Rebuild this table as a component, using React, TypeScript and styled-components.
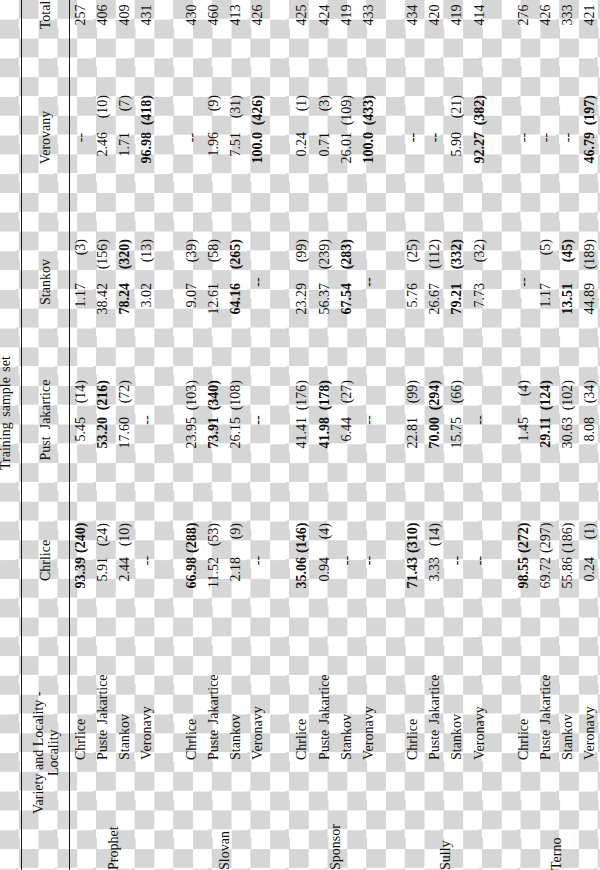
import React from 'react';
import styled, { createGlobalStyle } from 'styled-components';

const GlobalStyle = createGlobalStyle`
  html, body {
    margin: 0;
    padding: 0;
    background: #fff;
  }
`;

// the whole table is printed sideways, so it is laid out as an 870x600 sheet and turned
const COLS = '110px 162px 45px 30px 63px 47px 33px 55px 46px 40px 59px 52px 33px 65px 30px';
const ROW_H = 22.15;

const Page = styled.div`
  width: 600px;
  height: 870px;
  overflow: hidden;
  background-color: #fff;
  background-image: repeating-conic-gradient(#d6d6d6 0 25%, #ffffff 0 50%);
  background-size: 38.6px 38.6px;
  background-position: 0 0;
`;

const Sheet = styled.div`
  width: 870px;
  height: 600px;
  transform-origin: 0 0;
  transform: translateY(870px) rotate(-90deg);
  font-family: 'Liberation Serif', 'Times New Roman', serif;
  font-size: 14px;
  color: #111;
`;

const TitleRow = styled.div`
  height: 21px;
  border-bottom: 1px solid #1a1a1a;
  display: flex;
  align-items: flex-start;
`;

const Title = styled.div`
  margin-left: 400px;
  line-height: 11px;
  word-spacing: 2px;
  white-space: nowrap;
`;

const HeaderRow = styled.div`
  display: grid;
  grid-template-columns: ${COLS};
  height: 47px;
  border-bottom: 1px solid #1a1a1a;
  align-items: center;
`;

const HeaderLead = styled.div`
  grid-column: 1 / 3;
  justify-self: start;
  margin-left: 56px;
  text-align: center;
  line-height: 15px;
`;

const HeaderCell = styled.div<{ $col: number; $span: number }>`
  grid-column: ${(p) => p.$col} / span ${(p) => p.$span};
  justify-self: center;
  white-space: nowrap;
`;

const Group = styled.div`
  display: grid;
  grid-template-columns: ${COLS};
  grid-template-rows: repeat(4, ${ROW_H}px);
  align-items: center;
  margin-bottom: ${ROW_H}px;
`;

const Variety = styled.div`
  grid-column: 1;
  grid-row: 1 / 5;
  white-space: nowrap;
`;

const Locality = styled.div<{ $row: number }>`
  grid-column: 2;
  grid-row: ${(p) => p.$row};
  white-space: nowrap;
  word-spacing: 2px;
`;

const Num = styled.div<{ $col: number; $row: number; $bold?: boolean }>`
  grid-column: ${(p) => p.$col};
  grid-row: ${(p) => p.$row};
  padding-right: 4px;
  text-align: right;
  white-space: nowrap;
  font-weight: ${(p) => (p.$bold ? 700 : 400)};
`;

const Count = styled.div<{ $col: number; $row: number; $bold?: boolean }>`
  grid-column: ${(p) => p.$col};
  grid-row: ${(p) => p.$row};
  text-align: right;
  white-space: nowrap;
  font-weight: ${(p) => (p.$bold ? 700 : 400)};
`;

const Dash = styled.div<{ $col: number; $row: number; $bold?: boolean }>`
  grid-column: ${(p) => p.$col} / span 2;
  grid-row: ${(p) => p.$row};
  text-align: center;
  font-weight: ${(p) => (p.$bold ? 700 : 400)};
`;

const Total = styled.div<{ $row: number }>`
  grid-column: 15;
  grid-row: ${(p) => p.$row};
  text-align: center;
`;

type Cell = [string, string, boolean?] | null | 'b';

type Line = { place: string; cells: Cell[]; total: number };

const groups: { variety: string; lines: Line[] }[] = [
  {
    variety: 'Prophet',
    lines: [
      { place: 'Chrlice', cells: [['93.39', '(240)', true], ['5.45', '(14)'], ['1.17', '(3)'], null], total: 257 },
      { place: 'Puste Jakartice', cells: [['5.91', '(24)'], ['53.20', '(216)', true], ['38.42', '(156)'], ['2.46', '(10)']], total: 406 },
      { place: 'Stankov', cells: [['2.44', '(10)'], ['17.60', '(72)'], ['78.24', '(320)', true], ['1.71', '(7)']], total: 409 },
      { place: 'Veronavy', cells: [null, null, ['3.02', '(13)'], ['96.98', '(418)', true]], total: 431 },
    ],
  },
  {
    variety: 'Slovan',
    lines: [
      { place: 'Chrlice', cells: [['66.98', '(288)', true], ['23.95', '(103)'], ['9.07', '(39)'], null], total: 430 },
      { place: 'Puste Jakartice', cells: [['11.52', '(53)'], ['73.91', '(340)', true], ['12.61', '(58)'], ['1.96', '(9)']], total: 460 },
      { place: 'Stankov', cells: [['2.18', '(9)'], ['26.15', '(108)'], ['64.16', '(265)', true], ['7.51', '(31)']], total: 413 },
      { place: 'Veronavy', cells: [null, 'b', null, ['100.0', '(426)', true]], total: 426 },
    ],
  },
  {
    variety: 'Sponsor',
    lines: [
      { place: 'Chrlice', cells: [['35.06', '(146)', true], ['41.41', '(176)'], ['23.29', '(99)'], ['0.24', '(1)']], total: 425 },
      { place: 'Puste Jakartice', cells: [['0.94', '(4)'], ['41.98', '(178)', true], ['56.37', '(239)'], ['0.71', '(3)']], total: 424 },
      { place: 'Stankov', cells: [null, ['6.44', '(27)'], ['67.54', '(283)', true], ['26.01', '(109)']], total: 419 },
      { place: 'Veronavy', cells: [null, null, 'b', ['100.0', '(433)', true]], total: 433 },
    ],
  },
  {
    variety: 'Sully',
    lines: [
      { place: 'Chrlice', cells: [['71.43', '(310)', true], ['22.81', '(99)'], ['5.76', '(25)'], 'b'], total: 434 },
      { place: 'Puste Jakartice', cells: [['3.33', '(14)'], ['70.00', '(294)', true], ['26.67', '(112)'], 'b'], total: 420 },
      { place: 'Stankov', cells: [null, ['15.75', '(66)'], ['79.21', '(332)', true], ['5.90', '(21)']], total: 419 },
      { place: 'Veronavy', cells: [null, null, ['7.73', '(32)'], ['92.27', '(382)', true]], total: 414 },
    ],
  },
  {
    variety: 'Terno',
    lines: [
      { place: 'Chrlice', cells: [['98.55', '(272)', true], ['1.45', '(4)'], null, null], total: 276 },
      { place: 'Puste Jakartice', cells: [['69.72', '(297)'], ['29.11', '(124)', true], ['1.17', '(5)'], null], total: 426 },
      { place: 'Stankov', cells: [['55.86', '(186)'], ['30.63', '(102)'], ['13.51', '(45)', true], null], total: 333 },
      { place: 'Veronavy', cells: [['0.24', '(1)'], ['8.08', '(34)'], ['44.89', '(189)'], ['46.79', '(197)', true]], total: 421 },
    ],
  },
];

// first grid track of each data column (number track, count track follows)
const dataCols = [3, 6, 9, 12];

const headers = [
  { label: 'Chrlice', col: 3, span: 2 },
  { label: 'Pust\u00a0\u00a0Jakartice', col: 6, span: 2 },
  { label: 'Stankov', col: 9, span: 2 },
  { label: 'Verovany', col: 12, span: 2 },
  { label: 'Total', col: 15, span: 1 },
];

export default function App() {
  return (
    <>
      <GlobalStyle />
      <Page>
        <Sheet>
          <TitleRow>
            <Title>Training sample set</Title>
          </TitleRow>
          <HeaderRow>
            <HeaderLead>
              Variety and Locality -
              <br />
              Locality
            </HeaderLead>
            {headers.map((h) => (
              <HeaderCell key={h.col} $col={h.col} $span={h.span}>
                {h.label}
              </HeaderCell>
            ))}
          </HeaderRow>
          {groups.map((g) => (
            <Group key={g.variety}>
              <Variety>{g.variety}</Variety>
              {g.lines.map((line, i) => {
                const row = i + 1;
                return (
                  <React.Fragment key={line.place}>
                    <Locality $row={row}>{line.place}</Locality>
                    {line.cells.map((cell, c) => {
                      const col = dataCols[c];
                      if (cell === null || cell === 'b') {
                        return (
                          <Dash key={c} $col={col} $row={row} $bold={cell === 'b'}>
                            --
                          </Dash>
                        );
                      }
                      return (
                        <React.Fragment key={c}>
                          <Num $col={col} $row={row} $bold={cell[2]}>
                            {cell[0]}
                          </Num>
                          <Count $col={col + 1} $row={row} $bold={cell[2]}>
                            {cell[1]}
                          </Count>
                        </React.Fragment>
                      );
                    })}
                    <Total $row={row}>{line.total}</Total>
                  </React.Fragment>
                );
              })}
            </Group>
          ))}
        </Sheet>
      </Page>
    </>
  );
}
